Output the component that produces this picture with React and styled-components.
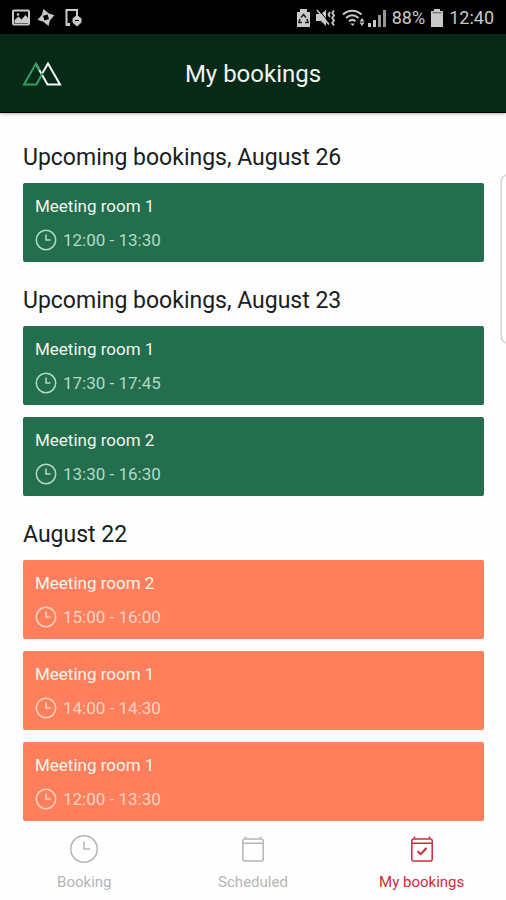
import React from "react";
import styled, { createGlobalStyle } from "styled-components";

const sections = [
  {
    title: "Upcoming bookings, August 26",
    bookings: [{ room: "Meeting room 1", time: "12:00 - 13:30" }],
  },
  {
    title: "Upcoming bookings, August 23",
    bookings: [
      { room: "Meeting room 1", time: "17:30 - 17:45" },
      { room: "Meeting room 2", time: "13:30 - 16:30" },
    ],
  },
  {
    title: "August 22",
    past: true,
    bookings: [
      { room: "Meeting room 2", time: "15:00 - 16:00" },
      { room: "Meeting room 1", time: "14:00 - 14:30" },
      { room: "Meeting room 1", time: "12:00 - 13:30" },
    ],
  },
];

function ClockIcon({ size, stroke }) {
  return (
    <svg width={size} height={size} viewBox="0 0 22 22" fill="none" stroke="currentColor" strokeWidth={stroke}>
      <circle cx="11" cy="11" r="9.7" />
      <path d="M11 5.5V11h4.5" />
    </svg>
  );
}

function CalendarIcon({ checked }) {
  return (
    <svg width="24" height="28" viewBox="0 0 24 28" fill="none" stroke="currentColor" strokeWidth="1.5">
      <rect x="1.8" y="4" width="20.4" height="22" rx="2" />
      <path d="M2 8.2h20M4.5 4V1.5M19.5 4V1.5" />
      {checked && <path d="M7.5 16.2l3.2 3L16.5 13" strokeWidth="2" />}
    </svg>
  );
}

function LogoIcon() {
  return (
    <svg width="40" height="26" viewBox="0 0 40 26" fill="none" strokeWidth="2">
      <path d="M14.5 4l11 19.5H38L26 2.5 20.5 12" stroke="#f4f7f5" />
      <path d="M20.5 12L14.5 23.5H2L14 2.5l3.5 6.5" stroke="#2f9e68" />
    </svg>
  );
}

function NoticeIcons() {
  const blade = "M-2.5-8.5L3.5-3.5L0-2.5L-3.5-1.5C-4.5-4-3-5.5-2.5-8.5z";
  return (
    <svg width="72" height="20" viewBox="0 0 72 20" fill="none" stroke="currentColor">
      <rect x="1" y="2.5" width="16" height="14" rx="1" strokeWidth="2" />
      <path d="M2.5 15v-3l4-3.5 3 3 4-4.5 2.5 3v5z" fill="currentColor" stroke="none" />
      <circle cx="6" cy="6.5" r="1.3" fill="currentColor" stroke="none" />
      <g fill="currentColor" stroke="none" transform="translate(34 9.5)">
        <path d={blade} />
        <path d={blade} transform="rotate(90)" />
        <path d={blade} transform="rotate(180)" />
        <path d={blade} transform="rotate(270)" />
      </g>
      <path d="M58 17h-3.5V2H65v6" strokeWidth="2" />
      <path d="M54 16.5h4" strokeWidth="3" />
      <path d="M65 7.5l4 3v4l-4 3.5-4-3.5v-4z" fill="currentColor" />
      <path d="M63 12.5h4" stroke="#000" />
    </svg>
  );
}

function SaverIcon() {
  return (
    <svg width="13" height="18" viewBox="0 0 13 18">
      <path d="M0 3h3V0h7v3h3v15H0z" fill="currentColor" />
      <path d="M4 8.5L6.5 5.5 9 8.5M10 10l1 3.5H8M5 13.5H2L3 10" stroke="#222" strokeWidth="1.6" fill="none" />
    </svg>
  );
}

function MuteIcon() {
  return (
    <svg width="20" height="18" viewBox="0 0 20 18" fill="currentColor" stroke="currentColor">
      <path d="M0 5h5l5-4v16l-5-5H0z" stroke="none" />
      <path d="M1 1l12 14.5" strokeWidth="1.6" />
      <path d="M2.5 0.5l12 14.5" stroke="#000" />
      <path d="M14 3l-1.5 2.5L14 8M18 1.5L16.2 4 18 6.5 16.2 9l1.8 2.5-1.8 2.5 1.8 2.5" fill="none" strokeWidth="1.8" />
    </svg>
  );
}

function WifiIcon() {
  return (
    <svg width="23" height="18" viewBox="0 0 23 18" fill="none" stroke="currentColor" strokeWidth="2">
      <path d="M1 5.5c5.5-5 13-5 18.5 0M4 9c4-3.5 8.5-3.5 12.5 0M7 12.2c2.2-1.8 4.3-1.8 6.5 0" />
      <path d="M8 14.5h4.5L11 17z" fill="currentColor" stroke="none" />
      <path d="M20 9l2.5 3.5h-5zM20 17l2.5-3.5h-5z" fill="currentColor" stroke="none" />
    </svg>
  );
}

function SignalIcon() {
  return (
    <svg width="18" height="18" viewBox="0 0 18 18" fill="currentColor">
      <path d="M0 14h3v4H0zM5 11h3v7H5z" />
      <path d="M10 6h3v12h-3zM15 1h3v17h-3z" opacity="0.75" />
    </svg>
  );
}

function BatteryIcon() {
  return (
    <svg width="12" height="18" viewBox="0 0 12 18" fill="currentColor">
      <path d="M0 2h3V0h6v2h3v16H0z" />
      <path d="M1.5 3.8h9" stroke="#555" />
    </svg>
  );
}

function App() {
  return (
    <>
      <GlobalStyle />
      <Page>
        <StatusBar>
          <NoticeIcons />
          <StatusGroup>
            <SaverIcon />
            <MuteIcon />
            <Reception>
              <WifiIcon />
              <SignalIcon />
            </Reception>
            <StatusText>88%</StatusText>
            <BatteryIcon />
            <StatusText>12:40</StatusText>
          </StatusGroup>
        </StatusBar>
        <Header>
          <LogoIcon />
          <Title>My bookings</Title>
        </Header>
        <Content>
          {sections.map((section) => (
            <Section key={section.title}>
              <Heading>{section.title}</Heading>
              <BookingList>
                {section.bookings.map((booking) => (
                  <Card key={booking.time} $past={section.past}>
                    <Room>{booking.room}</Room>
                    <Time $past={section.past}>
                      <ClockIcon size={22} stroke={1.5} />
                      {booking.time}
                    </Time>
                  </Card>
                ))}
              </BookingList>
            </Section>
          ))}
          <EdgeHandle />
        </Content>
        <TabBar>
          <Tab href="#booking">
            <TabIcon>
              <ClockIcon size={30} stroke={1.1} />
            </TabIcon>
            Booking
          </Tab>
          <Tab href="#scheduled">
            <TabIcon>
              <CalendarIcon />
            </TabIcon>
            Scheduled
          </Tab>
          <Tab href="#my-bookings" aria-current="page" $active>
            <TabIcon>
              <CalendarIcon checked />
            </TabIcon>
            My bookings
          </Tab>
        </TabBar>
      </Page>
    </>
  );
}

const GlobalStyle = createGlobalStyle`
  * {
    box-sizing: border-box;
  }
  body {
    margin: 0;
    background: #fefefe;
    font-family: Roboto, sans-serif;
  }
  svg {
    display: block;
    flex-shrink: 0;
  }
`;
const Page = styled.div`
  min-height: 100vh;
  display: flex;
  flex-direction: column;
  overflow-x: hidden;
`;
const StatusBar = styled.div`
  height: 34px;
  padding: 2px 12px 0;
  background: #000;
  color: #c9c9c9;
  display: flex;
  align-items: center;
  justify-content: space-between;
`;
const StatusGroup = styled.div`
  display: flex;
  align-items: center;
  gap: 6px;
`;
const Reception = styled.div`
  display: flex;
  gap: 3px;
`;
const StatusText = styled.span`
  font-size: 18px;
  line-height: 24px;
`;
const Header = styled.header`
  height: 79px;
  padding: 2px 22px 0;
  background: #062a17;
  border-bottom: 1px solid #000;
  box-shadow: 0 1px 3px rgba(0, 0, 0, 0.3);
  display: grid;
  grid-template-columns: 1fr auto 1fr;
  align-items: center;
`;
const Title = styled.h1`
  margin: 0;
  color: #f1f5f2;
  font-size: 24px;
  font-weight: 400;
  line-height: 32px;
`;
const Content = styled.main`
  position: relative;
  flex: 1;
  padding: 31px 22px 0 23px;
  display: flex;
  flex-direction: column;
  gap: 25px;
`;
const Section = styled.section``;
const Heading = styled.h2`
  margin: 0 0 11px;
  color: #17201c;
  font-size: 23px;
  font-weight: 400;
  line-height: 28px;
`;
const BookingList = styled.ul`
  margin: 0;
  padding: 0;
  list-style: none;
  display: grid;
  gap: 12px;
`;
const Card = styled.li`
  padding: 11px 12px 10px;
  border-radius: 2px;
  background: ${(props) => (props.$past ? "#ff7f5c" : "#226e4e")};
  display: grid;
  gap: 10px;
`;
const Room = styled.h3`
  margin: 0;
  color: #f3f5ec;
  font-size: 17px;
  font-weight: 400;
  line-height: 24px;
`;
const Time = styled.div`
  color: ${(props) => (props.$past ? "#ffd3c2" : "#b5d9c5")};
  font-size: 17px;
  line-height: 24px;
  display: flex;
  align-items: center;
  gap: 6px;
`;
const EdgeHandle = styled.div`
  position: absolute;
  top: 61px;
  right: -10px;
  width: 16px;
  height: 170px;
  border: 2px solid #dcdcdc;
  border-radius: 8px;
  background: #fff;
`;
const TabBar = styled.nav`
  padding: 12px 0 8px;
  display: grid;
  grid-template-columns: repeat(3, 1fr);
`;
const Tab = styled.a`
  color: ${(props) => (props.$active ? "#d0283f" : "#b5b5b5")};
  font-size: 15px;
  font-weight: 400;
  line-height: 20px;
  text-decoration: none;
  display: flex;
  flex-direction: column;
  align-items: center;
  gap: 7px;
`;
const TabIcon = styled.span`
  height: 32px;
  display: flex;
  align-items: center;
`;

export default App;
